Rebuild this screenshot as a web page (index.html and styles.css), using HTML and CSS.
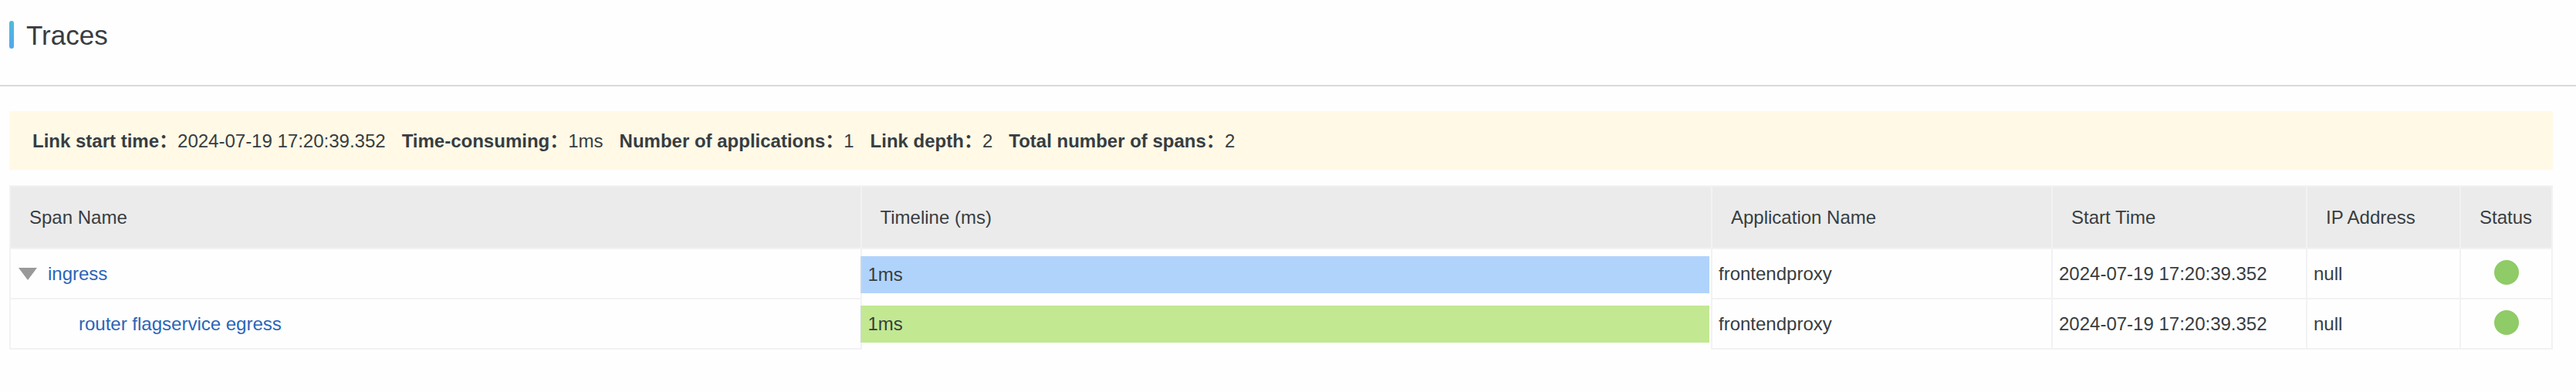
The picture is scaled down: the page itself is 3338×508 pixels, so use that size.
FILE: index.html
```html
<!DOCTYPE html>
<html lang="en">

<head>
    <meta charset="UTF-8">
    <meta name="viewport" content="width=device-width, initial-scale=1.0">
    <title>Traces</title>
    <link rel="stylesheet" href="styles.css">
</head>

<body>

    <header class="page-header">
        <h1>Traces</h1>
    </header>

    <main class="content">
        <dl class="summary">
            <div class="summary-item">
                <dt>Link start time：</dt>
                <dd>2024-07-19 17:20:39.352</dd>
            </div>
            <div class="summary-item">
                <dt>Time-consuming：</dt>
                <dd>1ms</dd>
            </div>
            <div class="summary-item">
                <dt>Number of applications：</dt>
                <dd>1</dd>
            </div>
            <div class="summary-item">
                <dt>Link depth：</dt>
                <dd>2</dd>
            </div>
            <div class="summary-item">
                <dt>Total number of spans：</dt>
                <dd>2</dd>
            </div>
        </dl>

        <table class="trace-table">
            <colgroup>
                <col>
                <col>
                <col class="col-app">
                <col class="col-time">
                <col class="col-ip">
                <col class="col-status">
            </colgroup>
            <thead>
                <tr>
                    <th>Span Name</th>
                    <th>Timeline (ms)</th>
                    <th>Application Name</th>
                    <th>Start Time</th>
                    <th>IP Address</th>
                    <th>Status</th>
                </tr>
            </thead>
            <tbody>
                <tr>
                    <td>
                        <div class="span-name">
                            <button type="button" class="toggle" aria-label="Collapse ingress" aria-expanded="true">
                                <svg width="24" height="16" viewBox="0 0 24 16"><path d="M0 0h24L12 16z" fill="#999"/></svg>
                            </button>
                            <a href="#">ingress</a>
                        </div>
                    </td>
                    <!-- one cell for the whole timeline, so no line runs between the bars -->
                    <td class="timeline" rowspan="2">
                        <div class="bar bar-blue">1ms</div>
                        <div class="bar bar-green">1ms</div>
                    </td>
                    <td>frontendproxy</td>
                    <td>2024-07-19 17:20:39.352</td>
                    <td>null</td>
                    <td class="status"><span class="dot" role="img" aria-label="OK"></span></td>
                </tr>
                <tr>
                    <td>
                        <div class="span-name child">
                            <a href="#">router flagservice egress</a>
                        </div>
                    </td>
                    <td>frontendproxy</td>
                    <td>2024-07-19 17:20:39.352</td>
                    <td>null</td>
                    <td class="status"><span class="dot" role="img" aria-label="OK"></span></td>
                </tr>
            </tbody>
        </table>
    </main>

</body>

</html>
```
FILE: styles.css
```css
body {
    font-family: "Liberation Sans", Arial, "Noto Sans CJK SC", sans-serif;
    font-size: 24px;
    line-height: 36px;
    color: #373d41;
    background-color: #fefefe;
    margin: 0;
}

.page-header {
    display: flex;
    align-items: flex-start;
    padding: 27px 12px 45px;
    border-bottom: 2px solid #d9dadc;
}

.page-header::before {
    content: "";
    width: 6px;
    height: 36px;
    border-radius: 3px;
    background: linear-gradient(#4fbcd9, #55a5ee);
}

h1 {
    margin: 0 0 0 16px;
    font-size: 35px;
    line-height: 38px;
    font-weight: normal;
}

.content {
    padding: 32px 30px 32px 12px;
}

.summary {
    display: flex;
    flex-wrap: wrap;
    gap: 21px;
    margin: 0 0 20px;
    padding: 21px 30px 19px;
    background-color: #fff9e6;
}

.summary-item {
    display: flex;
}

.summary dt {
    font-weight: bold;
}

.summary dd {
    margin: 0;
}

.trace-table {
    width: 100%;
    table-layout: fixed;
    border-collapse: collapse;
}

.col-app {
    width: 441px;
}

.col-time {
    width: 330px;
}

.col-ip {
    width: 199px;
}

.col-status {
    width: 119px;
}

.trace-table th,
.trace-table td {
    border: 2px solid #f2f2f4;
    text-align: left;
    font-weight: normal;
}

.trace-table th {
    height: 79px;
    padding: 0 0 0 24px;
    background-color: #ebebeb;
}

.trace-table td {
    height: 63px;
    padding: 0 8px;
}

.span-name {
    display: flex;
    align-items: center;
    padding-left: 2px;
}

.span-name.child {
    padding-left: 80px;
}

.toggle {
    display: flex;
    margin-right: 14px;
    padding: 0;
    border: none;
    background: none;
    cursor: pointer;
}

a {
    color: #2a65b8;
    text-decoration: none;
}

a:hover {
    text-decoration: underline;
}

.trace-table .timeline {
    padding: 8px 2px 8px 0;
    border-bottom: none;
}

/* bars start on top of the column line */
.bar {
    position: relative;
    margin-left: -2px;
    padding-left: 8px;
    border-left: 2px solid #cdd5df;
    line-height: 48px;
}

.bar + .bar {
    margin-top: 16px;
}

.bar-blue {
    background-color: #b0d3fb;
}

.bar-green {
    border-left-color: #cdd9cd;
    background-color: #c2e892;
}

.trace-table .status {
    text-align: center;
}

.dot {
    display: inline-block;
    width: 32px;
    height: 32px;
    margin-bottom: 4px;
    border-radius: 50%;
    background-color: #8fcb66;
    vertical-align: middle;
}
```
